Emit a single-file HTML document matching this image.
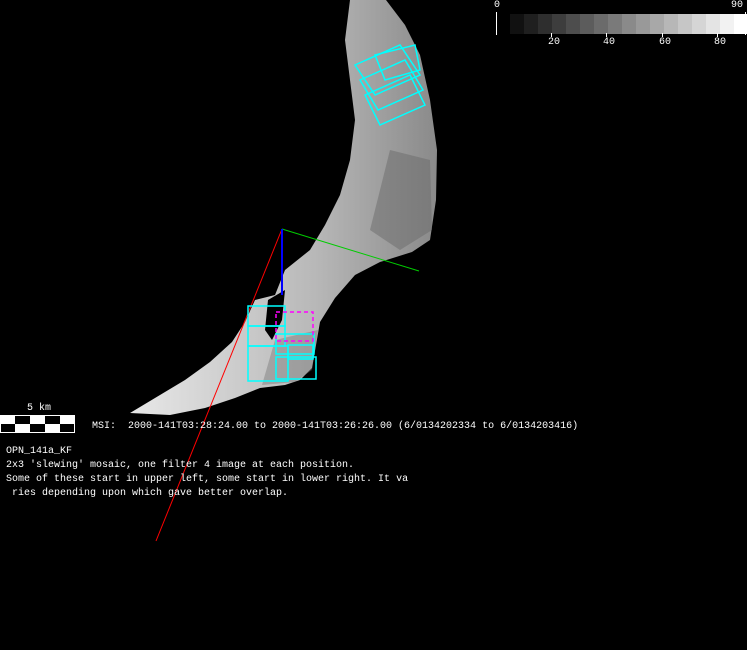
<!DOCTYPE html>
<html><head><style>
html,body{margin:0;padding:0;background:#000;width:747px;height:650px;overflow:hidden}
.t{position:absolute;font-family:"Liberation Mono",monospace;font-size:10px;color:#fff;white-space:pre;line-height:14px}
</style></head><body>
<svg width="747" height="650" style="position:absolute;left:0;top:0">
<defs>
<linearGradient id="g" x1="0" y1="0" x2="1" y2="0">
<stop offset="0" stop-color="#e8e8e8"/><stop offset="0.6" stop-color="#b8b8b8"/><stop offset="1" stop-color="#8a8a8a"/>
</linearGradient>
</defs>
<polygon fill="url(#g)" points="350,0 386,0 405,25 420,55 430,100 437,150 436,200 430,240 412,252 380,262 355,275 335,298 320,322 316,345 312,368 300,380 285,385 260,388 235,398 205,408 170,415 130,413 155,398 185,380 210,362 232,342 245,322 255,300 275,295 285,270 310,250 325,225 340,195 350,160 355,120 350,80 345,40"/>
<polygon fill="#6a6a6a" opacity="0.5" points="390,150 430,160 432,230 400,250 370,230"/>
<polygon fill="#707070" opacity="0.4" points="275,340 318,330 312,370 295,382 262,385"/>
<polygon fill="#000" points="268,300 285,290 282,320 272,340 265,330"/>
<line x1="282" y1="229" x2="156" y2="541" stroke="#f00" stroke-width="1"/>
<line x1="282" y1="229" x2="419" y2="271" stroke="#0c0" stroke-width="1"/>
<line x1="282" y1="229" x2="282" y2="295" stroke="#00f" stroke-width="2"/>
<g fill="none" stroke="#0ff" stroke-width="1.5">
<rect x="248" y="306" width="37" height="20"/><rect x="248" y="326" width="37" height="20"/>
<rect x="248" y="346" width="40" height="35"/><rect x="276" y="334" width="38" height="20"/>
<rect x="276" y="357" width="40" height="22"/><rect x="288" y="345" width="25" height="14"/>
<polygon points="355,65 400,45 420,75 375,95"/><polygon points="360,80 405,60 423,90 378,110"/>
<polygon points="365,95 410,75 425,105 380,125"/><polygon points="375,55 415,45 420,70 385,80"/>
</g>
<rect x="276" y="312" width="37" height="29" fill="none" stroke="#f0f" stroke-width="1.5" stroke-dasharray="4,3"/>
<g>
<rect x="510" y="14" width="14" height="20" fill="#111"/><rect x="524" y="14" width="14" height="20" fill="#1f1f1f"/>
<rect x="538" y="14" width="14" height="20" fill="#2e2e2e"/><rect x="552" y="14" width="14" height="20" fill="#3d3d3d"/>
<rect x="566" y="14" width="14" height="20" fill="#4d4d4d"/><rect x="580" y="14" width="14" height="20" fill="#5c5c5c"/>
<rect x="594" y="14" width="14" height="20" fill="#6b6b6b"/><rect x="608" y="14" width="14" height="20" fill="#7a7a7a"/>
<rect x="622" y="14" width="14" height="20" fill="#8a8a8a"/><rect x="636" y="14" width="14" height="20" fill="#999"/>
<rect x="650" y="14" width="14" height="20" fill="#a8a8a8"/><rect x="664" y="14" width="14" height="20" fill="#b7b7b7"/>
<rect x="678" y="14" width="14" height="20" fill="#c6c6c6"/><rect x="692" y="14" width="14" height="20" fill="#d5d5d5"/>
<rect x="706" y="14" width="14" height="20" fill="#e4e4e4"/><rect x="720" y="14" width="14" height="20" fill="#f2f2f2"/>
<rect x="734" y="14" width="13" height="20" fill="#fff"/>
<line x1="496.5" y1="12" x2="496.5" y2="35" stroke="#fff"/>
<line x1="745.5" y1="12" x2="745.5" y2="35" stroke="#fff"/>
<line x1="551.5" y1="33" x2="551.5" y2="37" stroke="#fff"/><line x1="606.5" y1="33" x2="606.5" y2="37" stroke="#fff"/>
<line x1="662.5" y1="33" x2="662.5" y2="37" stroke="#fff"/><line x1="717.5" y1="33" x2="717.5" y2="37" stroke="#fff"/>
</g>
<rect x="0" y="415" width="75" height="18" fill="#fff"/>
<g fill="#000">
<rect x="15" y="416" width="15" height="8"/><rect x="45" y="416" width="15" height="8"/>
<rect x="1" y="424" width="14" height="8"/><rect x="30" y="424" width="15" height="8"/><rect x="60" y="424" width="14" height="8"/>
</g>
</svg>
<div class="t" style="left:494px;top:-1px">0</div>
<div class="t" style="left:731px;top:-1px">90</div>
<div class="t" style="left:548px;top:36px">20</div>
<div class="t" style="left:603px;top:36px">40</div>
<div class="t" style="left:659px;top:36px">60</div>
<div class="t" style="left:714px;top:36px">80</div>
<div class="t" style="left:27px;top:402px">5 km</div>
<div class="t" style="left:92px;top:420px">MSI:  2000-141T03:28:24.00 to 2000-141T03:26:26.00 (6/0134202334 to 6/0134203416)</div>
<div class="t" style="left:6px;top:445px">OPN_141a_KF
2x3 'slewing' mosaic, one filter 4 image at each position.
Some of these start in upper left, some start in lower right. It va
 ries depending upon which gave better overlap.</div>
</body></html>
